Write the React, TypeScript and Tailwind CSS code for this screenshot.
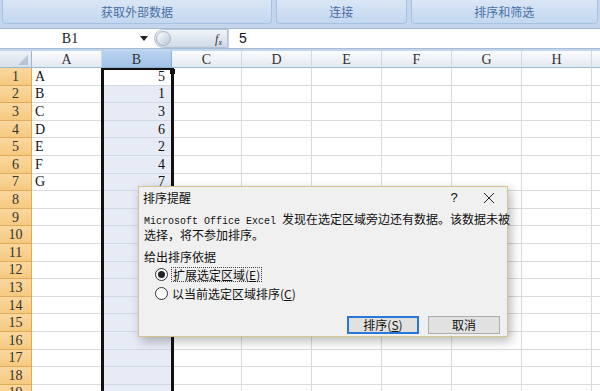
const COLS = ['A', 'B', 'C', 'D', 'E', 'F', 'G', 'H', 'I'];
const LETTERS = ['A', 'B', 'C', 'D', 'E', 'F', 'G'];
const NUMBERS = ['5', '1', '3', '6', '2', '4', '7'];
const ROWS = Array.from({ length: 19 }, (_, i) => i + 1);

function RibbonGroup({ label, width }: { label: string; width: string }) {
  return (
    <div
      className={`${width} h-[24px] flex items-center justify-center rounded-b-[4px] border border-t-0 border-[#a7c1e2] bg-gradient-to-b from-[#dae6f5] to-[#c3d7f0] text-[12px] text-[#4a6fa3] font-['Noto_Sans_CJK_SC',sans-serif]`}
    >
      {label}
    </div>
  );
}

function FormulaBar() {
  return (
    <div className="h-[21px] flex items-center bg-white border-y border-[#a5bad3]">
      <div className="w-[154px] h-full flex items-center">
        <span className="flex-1 text-center text-[14px] text-[#222] font-['Liberation_Serif',serif]">
          B1
        </span>
        <svg width="8" height="5" viewBox="0 0 8 5" className="mr-[6px]">
          <path d="M0 0 L8 0 L4 5 Z" fill="#222" />
        </svg>
      </div>
      <div className="w-[74px] h-[19px] flex items-center justify-between rounded-l-full bg-gradient-to-b from-[#f2f5f9] to-[#cfd9e6] border border-[#b3c2d4]">
        <div className="w-[15px] h-[15px] ml-[1px] rounded-full bg-gradient-to-br from-[#ffffff] to-[#b9c6d6] border border-[#a7b4c4]" />
        <span className="pr-[5px] text-[12px] italic text-[#333] font-['Liberation_Serif',serif]">
          f<sub className="text-[8px]">x</sub>
        </span>
      </div>
      <div className="h-full border-l border-[#c9d3df] pl-[10px] flex items-center text-[14px] text-[#111] font-['Liberation_Sans',sans-serif]">
        5
      </div>
    </div>
  );
}

function Grid() {
  return (
    <div className="relative">
      <div className="grid grid-cols-[32px_repeat(9,70px)] grid-rows-[17px] auto-rows-[17.6px]">
        <div className="relative bg-gradient-to-b from-[#eef2f7] to-[#d7e0ea] border-r border-b border-[#9eb6ce]">
          <svg width="10" height="10" viewBox="0 0 10 10" className="absolute right-[3px] bottom-[2px]">
            <path d="M10 0 L10 10 L0 10 Z" fill="#b8c4d2" />
          </svg>
        </div>
        {COLS.map((c) => (
          <div
            key={c}
            className={`flex items-center justify-center border-r border-b text-[14px] text-[#333] font-['Liberation_Serif',serif] ${
              c === 'B'
                ? 'bg-gradient-to-b from-[#b9d3f0] to-[#a2c2e7] border-[#8eaed3]'
                : 'bg-gradient-to-b from-[#fbfcfd] to-[#e3e9f1] border-r-[#cfd8e3] border-b-[#9eb6ce]'
            }`}
          >
            {c === 'I' ? '' : c}
          </div>
        ))}
        {ROWS.map((r) => (
          <div key={r} className="contents">
            <div className="flex items-center justify-center bg-gradient-to-b from-[#fad89f] to-[#f6c97f] border-r border-b border-[#dfaa5b] text-[14px] text-[#333] font-['Liberation_Serif',serif]">
              {r}
            </div>
            {COLS.map((c) => {
              const inB = c === 'B';
              const text =
                c === 'A' ? LETTERS[r - 1] ?? '' : inB ? NUMBERS[r - 1] ?? '' : '';
              return (
                <div
                  key={c}
                  className={`flex items-center border-r border-b text-[14px] text-[#111] font-['Liberation_Serif',serif] ${
                    inB
                      ? `justify-end pr-[6px] border-[#d2d8e6] ${r === 1 ? 'bg-white' : 'bg-[#e7ebf6]'}`
                      : 'pl-[3px] bg-white border-[#d8dadd]'
                  }`}
                >
                  {text}
                </div>
              );
            })}
          </div>
        ))}
      </div>
      {/* selection outline around column B */}
      <div className="absolute left-[101px] top-[17px] w-[73px] h-[400px] border-[3px] border-t-2 border-[#111]">
        <div className="absolute -right-[4px] top-[-1px] w-[5px] h-[5px] bg-[#111]" />
      </div>
    </div>
  );
}

function Radio({ checked, children }: { checked?: boolean; children: React.ReactNode }) {
  return (
    <div className="h-[16px] flex items-center gap-[3px] pl-[16px]">
      <div className="w-[13px] h-[13px] rounded-full border border-[#333] bg-white flex items-center justify-center">
        {checked && <div className="w-[7px] h-[7px] rounded-full bg-[#222]" />}
      </div>
      {children}
    </div>
  );
}

function Dialog() {
  return (
    <div className="absolute left-[138px] top-[186px] w-[370px] h-[151px] flex flex-col bg-[#f0f0f0] border border-[#d6c394] shadow-[3px_4px_10px_rgba(0,0,0,0.28)] text-[12px] text-[#111] font-['Noto_Sans_CJK_SC',sans-serif]">
      <div className="h-[22px] flex items-center pl-[4px] pr-[12px]">
        <span className="flex-1 leading-none">排序提醒</span>
        <span className="w-[14px] text-center text-[13px] font-['Liberation_Sans',sans-serif] mr-[22px]">?</span>
        <svg width="12" height="12" viewBox="0 0 12 12">
          <path d="M1 1 L11 11 M11 1 L1 11" stroke="#222" strokeWidth="1" />
        </svg>
      </div>
      <div className="pl-[5px] mt-[3px] leading-[13px] whitespace-nowrap">
        <span className="font-['Liberation_Mono',monospace] text-[10px]">Microsoft Office Excel </span>
        发现在选定区域旁边还有数据。该数据未被
        <br />
        选择，将不参加排序。
      </div>
      <div className="pl-[5px] mt-[9px] leading-[14px]">给出排序依据</div>
      <div className="mt-[2px] flex flex-col gap-[3px]">
        <Radio checked>
          <span className="border border-dotted border-[#444] leading-[13px] px-[1px]">
            扩展选定区域(<span className="underline">E</span>)
          </span>
        </Radio>
        <Radio>
          <span className="leading-[13px] px-[1px]">
            以当前选定区域排序(<span className="underline">C</span>)
          </span>
        </Radio>
      </div>
      <div className="mt-[15px] flex justify-end gap-[9px] pr-[7px]">
        <button className="w-[72px] h-[18px] flex items-center justify-center bg-[#e1e1e1] border-2 border-[#2a78d6] leading-none">
          排序(<span className="underline">S</span>)
        </button>
        <button className="w-[72px] h-[18px] flex items-center justify-center bg-[#e1e1e1] border border-[#adadad] leading-none">
          取消
        </button>
      </div>
    </div>
  );
}

export default function App() {
  return (
    <div className="relative w-[600px] h-[391px] overflow-hidden bg-[#c4d6ed]">
      <div className="flex gap-[4px] px-[2px]">
        <RibbonGroup label="获取外部数据" width="w-[271px]" />
        <RibbonGroup label="连接" width="w-[131px]" />
        <RibbonGroup label="排序和筛选" width="w-[188px]" />
      </div>
      <div className="mt-[4px]">
        <FormulaBar />
      </div>
      <div className="mt-[2px]">
        <Grid />
      </div>
      <Dialog />
    </div>
  );
}
